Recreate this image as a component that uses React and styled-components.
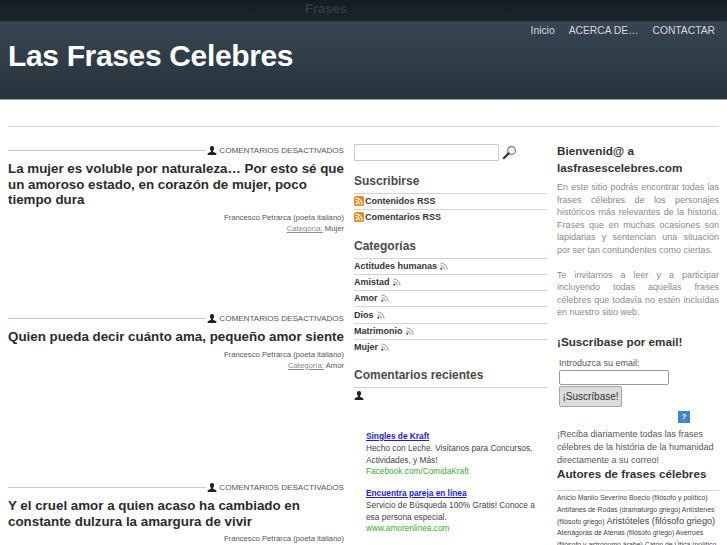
import styled, { createGlobalStyle } from "styled-components";

const GlobalStyle = createGlobalStyle`
html, body {
  margin: 0;
  padding: 0;
  height: 545px;
  overflow: hidden;
  background: #fff;
  font-family: "Liberation Sans", Arial, sans-serif;
}
`;

const TopBar = styled.div`
height: 21px;
background: linear-gradient(#141c21, #1b262b);
text-align: center;
font-weight: bold;
font-size: 13px;
line-height: 18px;
color: #33393b;
border-bottom: 1px solid #2b3a45;
padding-right: 75px;
`;

const Header = styled.header`
height: 77px;
background: linear-gradient(#374553, #27343c);
border-bottom: 1px solid #9a9fa3;
display: flex;
justify-content: space-between;
padding: 0 12px 0 8px;
`;

const SiteTitle = styled.h1`
margin: 16px 0 0;
font-size: 30px;
line-height: 36px;
font-weight: bold;
letter-spacing: -0.35px;
color: #fff;
`;

const Nav = styled.nav`
display: flex;
gap: 14px;
font-size: 10.3px;
line-height: 17px;
color: #d5d9dc;
`;

const Divider = styled.div`
margin: 26px 8px 0;
border-top: 1px solid #d2d2d2;
height: 0;
`;

const Columns = styled.div`
display: flex;
margin: 17px 8px 0;
`;

const Main = styled.main`
width: 336px;
margin-right: 10px;
flex: none;
`;

const Middle = styled.aside`
width: 193px;
margin-right: 10px;
flex: none;
`;

const Right = styled.aside`
width: 162px;
flex: none;
`;

const Post = styled.article`
height: ${(p) => p.$h}px;
`;

const PostMeta = styled.div`
display: flex;
align-items: center;
height: 13px;
font-size: 8.1px;
color: #555;
white-space: nowrap;
`;

const MetaLine = styled.div`
flex: 1;
border-top: 1px solid #c8c8c8;
margin-right: 1px;
`;

const PostTitle = styled.h2`
margin: 4px 0 0;
font-size: 13.35px;
line-height: 15.7px;
font-weight: bold;
color: #2b2b2b;
`;

const PostInfo = styled.div`
margin-top: 4px;
text-align: right;
font-size: 7.7px;
line-height: 11px;
color: #555;
`;

const CatLink = styled.span`
color: #8a8a8a;
text-decoration: underline;
`;

const SearchRow = styled.div`
display: flex;
align-items: center;
gap: 3px;
height: 17px;
`;

const SearchInput = styled.div`
width: 143px;
height: 15px;
border: 1px solid #c4c8c8;
border-radius: 1px;
`;

const WidgetTitle = styled.h3`
margin: 12px 0 0;
font-size: 12px;
line-height: 16px;
font-weight: bold;
color: #4a4a4a;
padding-bottom: 4px;
`;

const Row = styled.div`
display: flex;
align-items: center;
height: 14.3px;
padding-bottom: 1px;
border-top: 1px solid #d4d4d4;
font-size: 9px;
font-weight: bold;
color: #333;
gap: ${(p) => (p.$badge ? 1 : 3)}px;
`;

const Ad = styled.div`
margin: ${(p) => p.$top}px 0 0 12px;
font-size: 8.3px;
line-height: 12px;
color: #444;
`;

const AdTitle = styled.div`
font-weight: bold;
color: #1a1ae6;
text-decoration: underline;
`;

const AdUrl = styled.div`
color: #3aa83a;
line-height: 11px;
`;

const Greeting = styled.h3`
margin: -2px 0 0;
font-size: 11.7px;
line-height: 17px;
font-weight: bold;
color: #333;
`;

const Blurb = styled.p`
margin: ${(p) => p.$top}px 0 0;
font-size: 9px;
line-height: 12.6px;
color: #8a8a8a;
text-align: justify;
`;

const SubTitle = styled.h3`
margin: ${(p) => p.$top}px 0 0;
font-size: 11.7px;
line-height: 16px;
font-weight: bold;
color: #333;
`;

const SubForm = styled.div`
margin: 7px 0 0 2px;
font-size: 9px;
line-height: 13px;
color: #555;
`;

const EmailInput = styled.div`
width: 108px;
height: 13px;
border: 1px solid #9a9a9a;
border-radius: 2px;
background: #fff;
`;

const SubButton = styled.div`
width: 63px;
height: 21px;
margin-top: 1px;
box-sizing: border-box;
border: 1px solid #a5a8ab;
border-radius: 2px;
background: #dcdcdc;
font-size: 10px;
line-height: 19px;
text-align: center;
color: #333;
`;

const HelpRow = styled.div`
display: flex;
justify-content: flex-end;
padding-right: 29px;
margin-top: 4px;
`;

const HelpIcon = styled.div`
width: 12px;
height: 12px;
background: #3f86c6;
color: #fff;
font-size: 8px;
font-weight: bold;
line-height: 12px;
text-align: center;
`;

const SubText = styled.p`
margin: 5px 0 0;
font-size: 9px;
line-height: 13px;
color: #555;
`;

const TagCloud = styled.div`
margin-top: 8px;
border-top: 1px solid #d4d4d4;
padding-top: 1px;
font-size: 6.9px;
line-height: 11.8px;
color: #444;
`;

const BigTag = styled.span`
font-size: 9.2px;
`;

const MetaIcon = styled.svg`
width: 10px;
height: 9px;
flex: none;
margin-right: 2px;
`;

const UserIcon = () => (
  <MetaIcon viewBox="0 0 10 10">
    <path fill="#222" d="M5 0c1.5 0 2.3 1 2.3 2.4C7.3 3.8 6.6 5 6.2 5.4v.9L9.8 8v2H.2V8l3.6-1.7v-.9C3.4 5 2.7 3.8 2.7 2.4 2.7 1 3.5 0 5 0z" />
  </MetaIcon>
);

const FeedIcon = () => (
  <svg width="8" height="8" viewBox="0 0 8 8" style={{ flex: "none" }}>
    <circle cx="1.3" cy="6.7" r="1.1" fill="#555" />
    <path d="M.5 3.6a4 4 0 0 1 4 4M.5 1a6.6 6.6 0 0 1 6.6 6.6" fill="none" stroke="#999" strokeWidth="1" />
  </svg>
);

const RssBadge = () => (
  <svg width="10" height="10" viewBox="0 0 10 10" style={{ flex: "none" }}>
    <rect width="10" height="10" rx="1.5" fill="#ee8a22" />
    <circle cx="2.6" cy="7.4" r="1.1" fill="#fff" />
    <path d="M1.6 4.5a3.9 3.9 0 0 1 3.9 3.9M1.6 2a6.4 6.4 0 0 1 6.4 6.4" fill="none" stroke="#fff" strokeWidth="1.1" />
  </svg>
);

const SearchIcon = () => (
  <svg width="15" height="15" viewBox="0 0 15 15">
    <circle cx="9.5" cy="5.5" r="4" fill="#f2f2f2" stroke="#8a8a8a" strokeWidth="1.3" />
    <path d="M6.6 8.4 1.8 13.2" stroke="#333" strokeWidth="2.2" strokeLinecap="round" />
  </svg>
);

const posts = [
  { h: 168, title: "La mujer es voluble por naturaleza… Por esto sé que un amoroso estado, en corazón de mujer, poco tiempo dura", cat: "Mujer" },
  { h: 169, title: "Quien pueda decir cuánto ama, pequeño amor siente", cat: "Amor" },
  { h: 60, title: "Y el cruel amor a quien acaso ha cambiado en constante dulzura la amargura de vivir" },
];

const categories = ["Actitudes humanas", "Amistad", "Amor", "Dios", "Matrimonio", "Mujer"];

export default function App() {
  return (
    <>
      <GlobalStyle />
      <TopBar>Frases</TopBar>
      <Header>
        <SiteTitle>Las Frases Celebres</SiteTitle>
        <Nav>
          <span>Inicio</span>
          <span>ACERCA DE…</span>
          <span>CONTACTAR</span>
        </Nav>
      </Header>
      <Divider />
      <Columns>
        <Main>
          {posts.map((post) => (
            <Post key={post.title} $h={post.h}>
              <PostMeta>
                <MetaLine />
                <UserIcon />
                COMENTARIOS DESACTIVADOS
              </PostMeta>
              <PostTitle>{post.title}</PostTitle>
              <PostInfo>
                Francesco Petrarca (poeta italiano)
                {post.cat && (
                  <>
                    <br />
                    <CatLink>Categoría:</CatLink> {post.cat}
                  </>
                )}
              </PostInfo>
            </Post>
          ))}
        </Main>
        <Middle>
          <SearchRow>
            <SearchInput />
            <SearchIcon />
          </SearchRow>
          <WidgetTitle>Suscribirse</WidgetTitle>
          <Row $badge>
            <RssBadge />
            Contenidos RSS
          </Row>
          <Row $badge>
            <RssBadge />
            Comentarios RSS
          </Row>
          <WidgetTitle>Categorías</WidgetTitle>
          {categories.map((cat) => (
            <Row key={cat}>
              {cat} <FeedIcon />
            </Row>
          ))}
          <WidgetTitle>Comentarios recientes</WidgetTitle>
          <Row>
            <UserIcon />
          </Row>
          <Ad $top={26}>
            <AdTitle>Singles de Kraft</AdTitle>
            Hecho con Leche. Visítanos para Concursos, Actividades, y Más!
            <AdUrl>Facebook.com/ComidaKraft</AdUrl>
          </Ad>
          <Ad $top={10}>
            <AdTitle>Encuentra pareja en línea</AdTitle>
            Servicio de Búsqueda 100% Gratis! Conoce a esa persona especial.
            <AdUrl>www.amorenlinea.com</AdUrl>
          </Ad>
        </Middle>
        <Right>
          <Greeting>Bienvenid@ a lasfrasescelebres.com</Greeting>
          <Blurb $top={5}>
            En este sitio podrás encontrar todas las frases célebres de los personajes históricos más relevantes de la historia. Frases que en muchas ocasiones son lapidarias y sentencian una situación por ser tan contundentes como ciertas.
          </Blurb>
          <Blurb $top={12}>
            Te invitamos a leer y a participar incluyendo todas aquellas frases célebres que todavía no estén incluídas en nuestro sitio web.
          </Blurb>
          <SubTitle $top={15}>¡Suscríbase por email!</SubTitle>
          <SubForm>
            Introduzca su email:
            <EmailInput />
            <SubButton>¡Suscríbase!</SubButton>
          </SubForm>
          <HelpRow>
            <HelpIcon>?</HelpIcon>
          </HelpRow>
          <SubText>
            ¡Reciba diariamente todas las frases célebres de la história de la humanidad directamente a su correo!
          </SubText>
          <SubTitle $top={-1}>Autores de frases célebres</SubTitle>
          <TagCloud>
            Anicio Manlio Severino Boecio (filósofo y político) Antífanes de Rodas (dramaturgo griego) Antístenes (filósofo griego) <BigTag>Aristóteles (filósofo griego)</BigTag> Atenágoras de Atenas (filósofo griego) Averroes (filósofo y astrónomo árabe) Catón de Útica (político
          </TagCloud>
        </Right>
      </Columns>
    </>
  );
}
